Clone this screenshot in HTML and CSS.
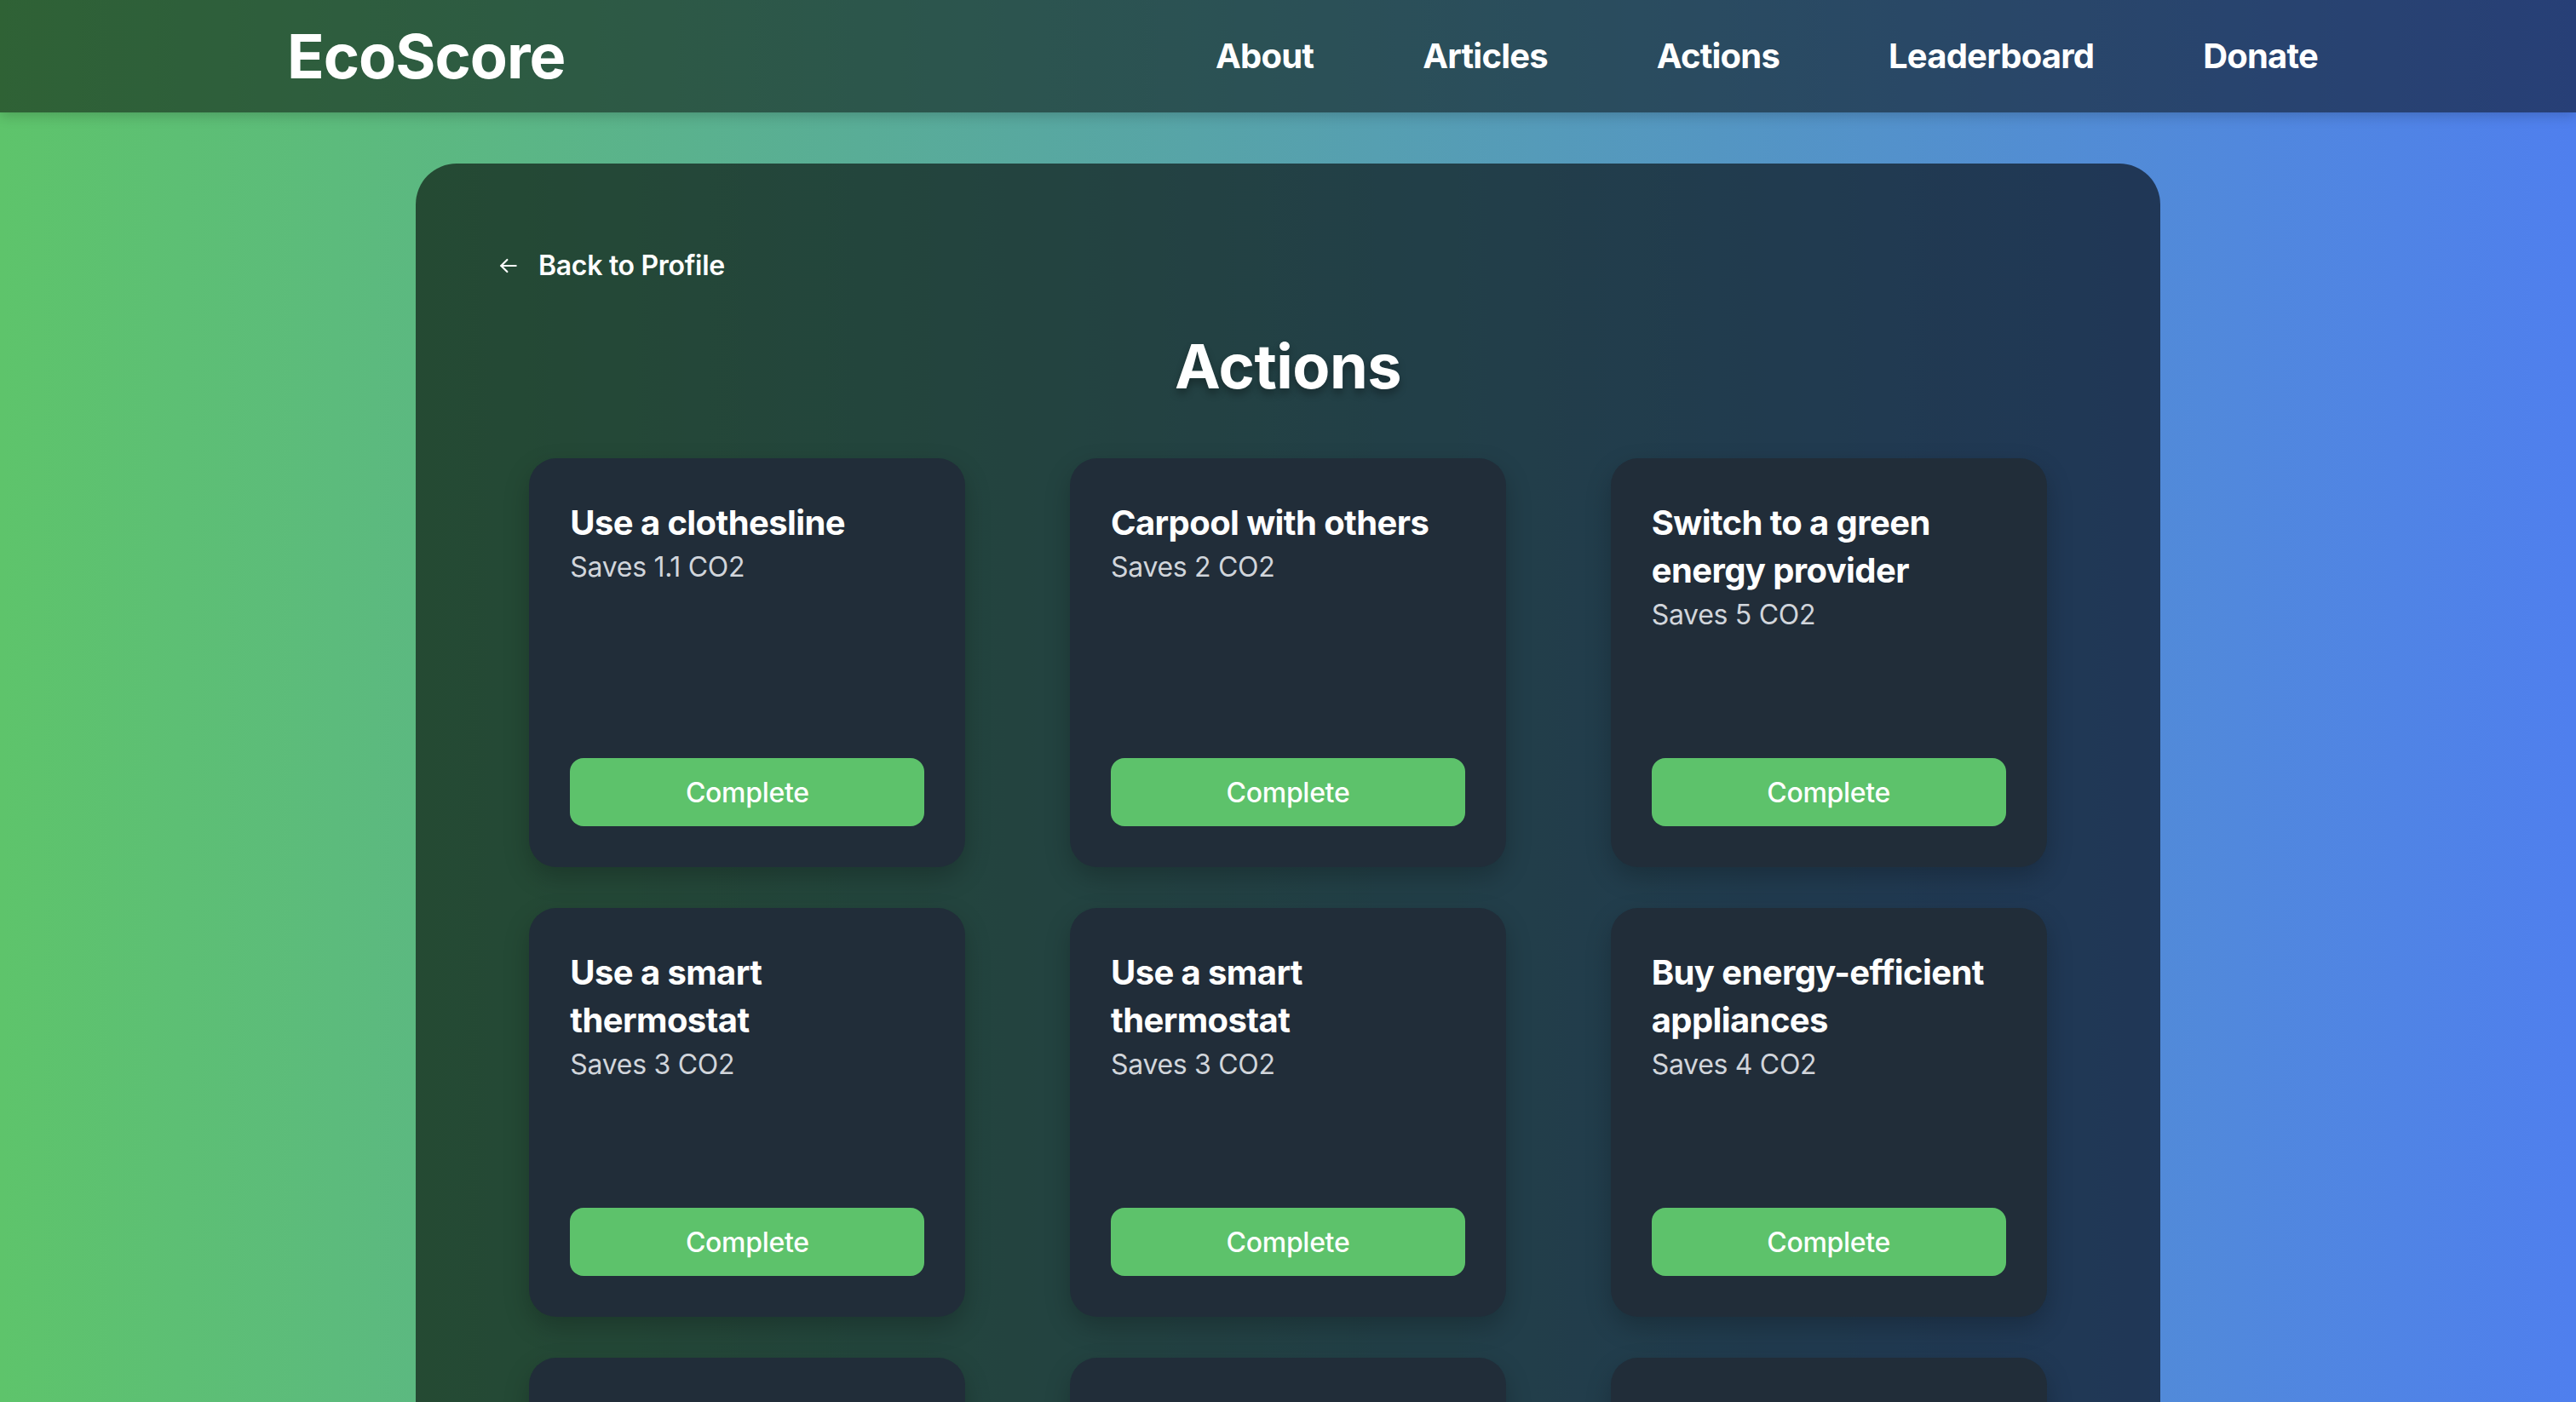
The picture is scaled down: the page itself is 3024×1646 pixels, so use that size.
FILE: index.html
```html
<!DOCTYPE html>
<html lang="en">
<head>
<meta charset="utf-8">
<title>EcoScore – Actions</title>
<link rel="stylesheet" href="styles.css">
</head>
<body>
<header class="topbar">
  <div class="logo">EcoScore</div>
  <nav class="nav">
    <a href="#">About</a>
    <a href="#">Articles</a>
    <a href="#">Actions</a>
    <a href="#">Leaderboard</a>
    <a href="#">Donate</a>
  </nav>
</header>

<main class="panel">
  <a class="back" href="#">
    <svg class="back-icon" viewBox="0 0 24 24" width="24" height="24" fill="none" stroke="currentColor" stroke-width="2" stroke-linecap="round" stroke-linejoin="round"><path d="M20 12H4"/><path d="M10.5 5.5 4 12l6.5 6.5"/></svg>
    <span>Back to Profile</span>
  </a>
  <h1 class="title">Actions</h1>

  <div class="grid">
    <div class="cell"><div class="card">
      <h2 class="card-title">Use a clothesline</h2>
      <p class="card-sub">Saves 1.1 CO2</p>
      <button class="btn">Complete</button>
    </div></div>
    <div class="cell"><div class="card">
      <h2 class="card-title">Carpool with others</h2>
      <p class="card-sub">Saves 2 CO2</p>
      <button class="btn">Complete</button>
    </div></div>
    <div class="cell"><div class="card">
      <h2 class="card-title">Switch to a green energy provider</h2>
      <p class="card-sub">Saves 5 CO2</p>
      <button class="btn">Complete</button>
    </div></div>
    <div class="cell"><div class="card">
      <h2 class="card-title">Use a smart thermostat</h2>
      <p class="card-sub">Saves 3 CO2</p>
      <button class="btn">Complete</button>
    </div></div>
    <div class="cell"><div class="card">
      <h2 class="card-title">Use a smart thermostat</h2>
      <p class="card-sub">Saves 3 CO2</p>
      <button class="btn">Complete</button>
    </div></div>
    <div class="cell"><div class="card">
      <h2 class="card-title">Buy energy-efficient appliances</h2>
      <p class="card-sub">Saves 4 CO2</p>
      <button class="btn">Complete</button>
    </div></div>
    <div class="cell"><div class="card">
      <h2 class="card-title">Bike to work</h2>
      <p class="card-sub">Saves 2 CO2</p>
      <button class="btn">Complete</button>
    </div></div>
    <div class="cell"><div class="card">
      <h2 class="card-title">Eat a plant-based meal</h2>
      <p class="card-sub">Saves 1.5 CO2</p>
      <button class="btn">Complete</button>
    </div></div>
    <div class="cell"><div class="card">
      <h2 class="card-title">Unplug idle electronics</h2>
      <p class="card-sub">Saves 0.5 CO2</p>
      <button class="btn">Complete</button>
    </div></div>
  </div>
</main>
</body>
</html>
```

FILE: styles.css
```css
* {
  box-sizing: border-box;
}

html, body {
  margin: 0;
  padding: 0;
}

body {
  min-height: 100vh;
  font-family: Inter, "Noto Sans", "Liberation Sans", sans-serif;
  color: #ffffff;
  background: linear-gradient(to right, #5ec46b 0%, #4f7fee 100%);
  background-attachment: fixed;
}

.topbar {
  height: 132px;
  display: flex;
  align-items: center;
  justify-content: space-between;
  padding: 0 303px 0 337px;
  background: rgba(0, 0, 0, 0.5);
  box-shadow: 0 4px 14px rgba(0, 0, 0, 0.18);
}

.logo {
  font-size: 72px;
  line-height: 80px;
  font-weight: 700;
  letter-spacing: -1px;
}

.nav {
  display: flex;
  align-items: center;
  gap: 128px;
}

.nav a {
  color: #ffffff;
  text-decoration: none;
  font-size: 40px;
  line-height: 56px;
  font-weight: 700;
  letter-spacing: -0.8px;
}

.panel {
  width: 2048px;
  margin: 60px auto 0;
  padding: 96px;
  border-radius: 48px;
  background: rgba(0, 0, 0, 0.6);
}

.back {
  display: inline-flex;
  align-items: center;
  gap: 22px;
  color: #ffffff;
  text-decoration: none;
  font-size: 32px;
  line-height: 48px;
  font-weight: 600;
  letter-spacing: -0.3px;
}

.back-icon {
  width: 26px;
  height: 26px;
  flex: none;
}

.title {
  margin: 54px 0 68px;
  text-align: center;
  font-size: 72px;
  line-height: 80px;
  font-weight: 700;
  letter-spacing: -0.5px;
  text-shadow: 0 6px 10px rgba(0, 0, 0, 0.3);
}

.grid {
  display: grid;
  grid-template-columns: repeat(3, 1fr);
  gap: 48px;
}

.cell {
  display: flex;
  justify-content: center;
}

.card {
  width: 512px;
  height: 480px;
  padding: 48px;
  border-radius: 32px;
  background: #212d39;
  box-shadow: 0 12px 30px rgba(0, 0, 0, 0.22);
  display: flex;
  flex-direction: column;
}

.card-title {
  margin: 0;
  font-size: 40px;
  line-height: 56px;
  font-weight: 700;
  letter-spacing: -0.6px;
}

.card-sub {
  margin: 0;
  font-size: 32px;
  line-height: 48px;
  color: #d1d5db;
  letter-spacing: -0.3px;
}

.btn {
  margin-top: auto;
  width: 100%;
  height: 80px;
  border: 0;
  border-radius: 16px;
  background: #5dc26b;
  color: #ffffff;
  font-family: inherit;
  font-size: 32px;
  font-weight: 500;
  letter-spacing: -0.3px;
  cursor: pointer;
}
```
